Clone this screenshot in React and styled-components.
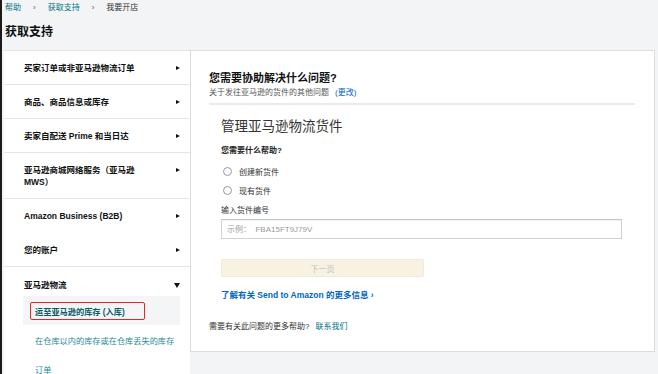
import React, { useState } from 'react';
import styled, { createGlobalStyle } from 'styled-components';

const GlobalStyle = createGlobalStyle`
  html, body {
    margin: 0;
    padding: 0;
    background: #f2f4f5;
    font-family: "Liberation Sans", "Noto Sans CJK SC", Arial, sans-serif;
    color: #0f1111;
  }
`;

const Page = styled.div`
  min-height: 100vh;
  border-left: 2px solid #1b1b1b;
  padding: 0 3px 0 2px;
  box-sizing: border-box;
  overflow: hidden;
`;

const Breadcrumb = styled.div`
  display: flex;
  align-items: center;
  gap: 12px;
  padding: 3px 0 0 1px;
  font-size: 8px;
  line-height: 10px;
`;

const Crumb = styled.span`
  color: ${props => (props.current ? '#333' : '#007185')};
`;

const Sep = styled.span`
  color: #555;
  font-size: 8px;
`;

const Title = styled.h1`
  margin: 11px 0 0 1px;
  font-size: 12px;
  line-height: 16px;
  font-weight: 700;
  color: #0f1111;
`;

const Columns = styled.div`
  display: grid;
  grid-template-columns: 186px 465px;
  align-items: start;
  margin-top: 10px;
`;

const Menu = styled.nav`
  background: #fff;
  border-top: 1px solid #e3e6e6;
  min-height: 360px;
`;

const MenuItem = styled.div`
  display: flex;
  justify-content: space-between;
  align-items: flex-start;
  padding: ${props => (props.open ? '12px 10px 5px 20px' : '11px 10px 10px 20px')};
  border-bottom: ${props => (props.noLine || props.open ? 'none' : '1px solid #e3e6e6')};
  margin-bottom: ${props => (props.noLine ? '1px' : '0')};
  font-size: 8.5px;
  line-height: 12px;
  font-weight: 700;
  cursor: pointer;
`;

const MenuLabel = styled.span`
  max-width: 132px;
`;

const Caret = styled.span`
  width: 0;
  height: 0;
  margin-top: 3.5px;
  border-style: solid;
  ${props =>
    props.open
      ? 'border-width: 5px 3px 0 3px; border-color: #111 transparent transparent transparent; margin-top: 4px;'
      : 'border-width: 2.5px 0 2.5px 4.5px; border-color: transparent transparent transparent #111;'}
`;

const SubList = styled.div`
  display: flex;
  flex-direction: column;
  margin: 0 10px 0 19px;
`;

const SubItem = styled.div`
  display: flex;
  align-items: center;
  height: 29px;
  padding-left: ${props => (props.active ? '7px' : '12px')};
  background: ${props => (props.active ? '#f3f5f6' : 'transparent')};
  font-size: 8.2px;
  font-weight: ${props => (props.active ? 700 : 400)};
  color: ${props => (props.active ? '#0a5a68' : '#1f8a9a')};
  white-space: nowrap;
`;

const Highlight = styled.span`
  border: 1.5px solid #e3242b;
  border-radius: 2px;
  padding: 2px 19px 2px 4px;
`;

const Card = styled.section`
  background: #fff;
  border: 1px solid #d9dede;
  height: 302px;
  box-sizing: border-box;
  padding: 20px 19px 0 18px;
`;

const Heading = styled.h2`
  margin: 0;
  font-size: 11px;
  line-height: 14px;
  font-weight: 700;
  color: #0f1111;
`;

const SubHeading = styled.div`
  margin-top: 3px;
  font-size: 8px;
  line-height: 10px;
  color: #555;
  display: flex;
  gap: 6px;
`;

const BlueLink = styled.a`
  color: #0066c0;
  text-decoration: none;
  font-weight: ${props => (props.bold ? 700 : 400)};
`;

const TealLink = styled.a`
  color: #007185;
  text-decoration: none;
`;

const Divider = styled.hr`
  margin: 5px 0 0;
  border: none;
  height: 2px;
  background: #e9ebeb;
`;

const Form = styled.form`
  padding: 0 13px 0 12px;
  display: flex;
  flex-direction: column;
`;

const FormTitle = styled.h3`
  margin: 14px 0 0;
  font-size: 13.5px;
  line-height: 16px;
  font-weight: 400;
  color: #333;
`;

const Question = styled.div`
  margin-top: 11px;
  font-size: 8px;
  line-height: 10px;
  font-weight: 700;
  color: #222;
`;

const RadioRow = styled.label`
  display: flex;
  align-items: center;
  gap: 7px;
  height: 12px;
  margin-top: ${props => props.gap}px;
  padding-left: 2px;
  font-size: 8px;
  color: #333;
  cursor: pointer;
`;

const RadioDot = styled.span`
  width: 7px;
  height: 7px;
  border-radius: 50%;
  border: 1px solid #9a9a9a;
  background: ${props => (props.checked ? 'radial-gradient(#333 35%, #fff 40%)' : '#fff')};
`;

const FieldLabel = styled.div`
  margin-top: 10px;
  font-size: 8px;
  line-height: 10px;
  color: #333;
`;

const Input = styled.input`
  margin-top: 3px;
  height: 20px;
  box-sizing: border-box;
  border: 1px solid #d0d3d3;
  border-top-color: #c2c6c6;
  box-shadow: inset 0 1px 1px rgba(0, 0, 0, 0.06);
  padding: 0 5px;
  font-size: 8px;
  font-family: inherit;
  outline: none;

  &::placeholder {
    color: #9a9a9a;
  }
`;

const NextButton = styled.button`
  margin-top: 20px;
  width: 203px;
  height: 18px;
  border: 1px solid #f1ead8;
  border-radius: 2px;
  background: #f8f2e3;
  color: #c2c0bb;
  font-size: 8px;
  font-family: inherit;
`;

const LearnMore = styled.div`
  margin-top: 13px;
  font-size: 8.5px;
  line-height: 10px;
`;

const Footer = styled.div`
  margin-top: 22px;
  font-size: 8px;
  line-height: 10px;
  color: #333;
  display: flex;
  gap: 6px;
`;

const menu = [
  { label: '买家订单或非亚马逊物流订单' },
  { label: '商品、商品信息或库存' },
  { label: '卖家自配送 Prime 和当日达' },
  { label: '亚马逊商城网络服务（亚马逊 MWS）' },
  { label: 'Amazon Business (B2B)', noLine: true },
  { label: '您的账户' },
];

const App = () => {
  const [choice, setChoice] = useState('');

  return (
    <>
      <GlobalStyle />
      <Page>
        <Breadcrumb>
          <Crumb>帮助</Crumb>
          <Sep>›</Sep>
          <Crumb>获取支持</Crumb>
          <Sep>›</Sep>
          <Crumb current>我要开店</Crumb>
        </Breadcrumb>
        <Title>获取支持</Title>
        <Columns>
          <Menu>
            {menu.map(item => (
              <MenuItem key={item.label} noLine={item.noLine}>
                <MenuLabel>{item.label}</MenuLabel>
                <Caret />
              </MenuItem>
            ))}
            <MenuItem open>
              <MenuLabel>亚马逊物流</MenuLabel>
              <Caret open />
            </MenuItem>
            <SubList>
              <SubItem active>
                <Highlight>运至亚马逊的库存 (入库)</Highlight>
              </SubItem>
              <SubItem>在仓库以内的库存或在仓库丢失的库存</SubItem>
              <SubItem>订单</SubItem>
            </SubList>
          </Menu>
          <Card>
            <Heading>您需要协助解决什么问题?</Heading>
            <SubHeading>
              <span>关于发往亚马逊的货件的其他问题</span>
              <BlueLink href="#">(更改)</BlueLink>
            </SubHeading>
            <Divider />
            <Form onSubmit={e => e.preventDefault()}>
              <FormTitle>管理亚马逊物流货件</FormTitle>
              <Question>您需要什么帮助?</Question>
              <RadioRow gap={9} onClick={() => setChoice('new')}>
                <RadioDot checked={choice === 'new'} />
                创建新货件
              </RadioRow>
              <RadioRow gap={7} onClick={() => setChoice('existing')}>
                <RadioDot checked={choice === 'existing'} />
                现有货件
              </RadioRow>
              <FieldLabel>输入货件编号</FieldLabel>
              <Input placeholder="示例：  FBA15FT9J79V" />
              <NextButton type="submit" disabled>下一页</NextButton>
              <LearnMore>
                <BlueLink href="#" bold>了解有关 Send to Amazon 的更多信息 ›</BlueLink>
              </LearnMore>
            </Form>
            <Footer>
              <span>需要有关此问题的更多帮助?</span>
              <TealLink href="#">联系我们</TealLink>
            </Footer>
          </Card>
        </Columns>
      </Page>
    </>
  );
};

export default App;
